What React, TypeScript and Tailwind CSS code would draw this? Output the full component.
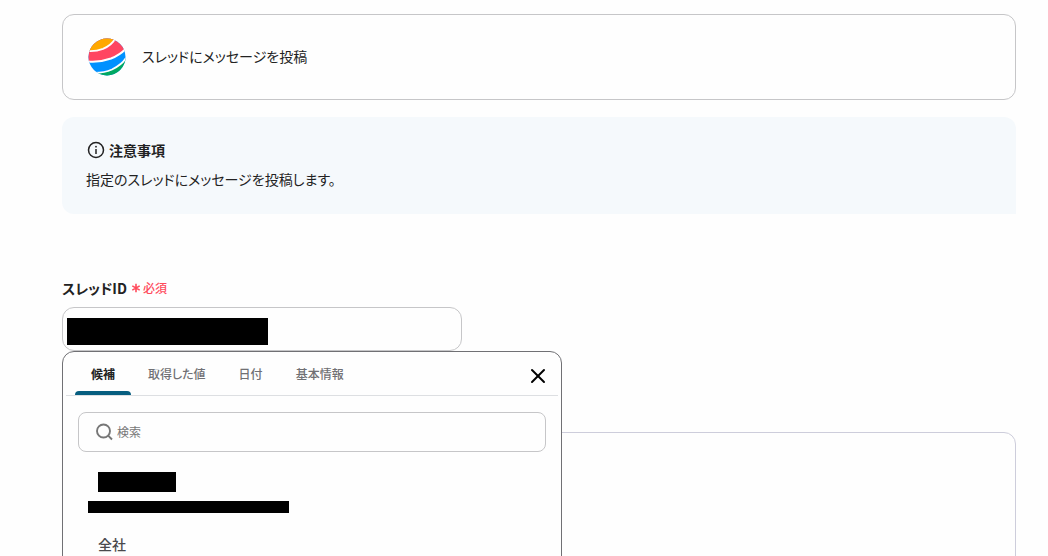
import React, { useState } from 'react';
import { X } from 'lucide-react';

const tabs = [
  { id: 'candidates', label: '候補' },
  { id: 'values', label: '取得した値' },
  { id: 'date', label: '日付' },
  { id: 'basic', label: '基本情報' },
];

function AppLogo() {
  return (
    <svg viewBox="0 0 38 38" className="w-[38px] h-[38px] shrink-0" aria-hidden="true">
      <defs>
        <clipPath id="ball">
          <circle cx="19" cy="19" r="18.5" />
        </clipPath>
      </defs>
      <g clipPath="url(#ball)">
        <rect width="38" height="38" fill="#0091ff" />
        <path d="M0 0H38V10Q32 17 23 20.500Q11 24 0 23Z" fill="#ff4661" />
        <path d="M0 0H27Q23 7 15 10.500Q9 12.800 0 12.800Z" fill="#ffa800" />
        <path d="M0 35Q14 36.500 24 32Q34 27 38 20V38H0Z" fill="#00a862" />
        <g fill="none" stroke="#fefefe" strokeWidth="1.9">
          <path d="M0 13Q8 13.500 15 10.800Q24 7 27.500 0" />
          <path d="M0 23.5Q12 24.500 23 20.500Q32 17 38 10.500" />
          <path d="M0 34.500Q14 36 24 31.500Q34 26.500 38 20" />
        </g>
      </g>
    </svg>
  );
}

function InfoIcon() {
  return (
    <svg viewBox="0 0 18 18" className="w-[18px] h-[18px] shrink-0" fill="none" stroke="currentColor" aria-hidden="true">
      <circle cx="9" cy="9" r="7.500" strokeWidth="1.500" />
      <path d="M9 8V13" strokeWidth="1.500" />
      <circle cx="9" cy="5.700" r="0.900" fill="currentColor" stroke="none" />
    </svg>
  );
}

function RequiredMark() {
  return (
    <svg viewBox="0 0 10 10" className="w-[10px] h-[10px] shrink-0" fill="none" stroke="currentColor" strokeWidth="1.6" aria-hidden="true">
      <path d="M5 0.700V9.300M1.300 2.900L8.700 7.100M1.300 7.100L8.700 2.900" />
    </svg>
  );
}

function SearchIcon() {
  return (
    <svg viewBox="0 0 18 18" className="w-[18px] h-[18px] shrink-0 text-[#777]" fill="none" stroke="currentColor" strokeWidth="1.900" aria-hidden="true">
      <circle cx="8.500" cy="8" r="6.500" />
      <path d="M13.200 12.700L17 16.500" />
    </svg>
  );
}

function CandidatePanel() {
  const [activeTab, setActiveTab] = useState('candidates');
  const [open, setOpen] = useState(true);
  const [query, setQuery] = useState('');

  if (!open) return null;

  return (
    <div className="absolute left-0 top-full z-10 w-[500px] max-w-full h-80 rounded-xl border border-[#707074] bg-[#fefefe] px-[3px]">
      <div className="flex items-center justify-between border-b border-[#dddfe2] px-2">
        <div role="tablist" className="flex gap-px pl-px">
          {tabs.map((tab) => (
            <button
              key={tab.id}
              role="tab"
              aria-selected={activeTab === tab.id}
              onClick={() => setActiveTab(tab.id)}
              className={`relative h-[43px] px-4 text-xs ${activeTab === tab.id ? 'font-bold text-[#222]' : 'font-medium text-[#707074]'}`}
            >
              {tab.label}
              {activeTab === tab.id && (
                <span className="absolute inset-x-0 bottom-0 h-1 rounded-t bg-[#075e80]" />
              )}
            </button>
          ))}
        </div>
        <button aria-label="閉じる" onClick={() => setOpen(false)} className="pt-1">
          <X className="w-6 h-6 text-black" strokeWidth={2} />
        </button>
      </div>

      <div className="px-3 pt-4">
        <label className="flex items-center gap-1 h-10 rounded-lg border border-[#c6c6c8] px-4">
          <SearchIcon />
          <input
            type="text"
            aria-label="検索"
            placeholder="検索"
            value={query}
            onChange={(e) => setQuery(e.target.value)}
            className="w-full bg-transparent text-xs text-[#333] placeholder:text-[#777] outline-none"
          />
        </label>
      </div>

      <ul className="px-[22px] pt-5 text-sm font-medium text-[#4a4a4d]">
        <li>
          <button aria-label="候補 1" className="block">
            <span className="block ml-[10px] h-5 w-[78px] bg-black" />
            <span className="block mt-[9px] h-3 w-[201px] bg-black" />
          </button>
        </li>
        <li className="pt-[21px]">
          <button className="block pl-[10px] leading-5">全社</button>
        </li>
      </ul>
    </div>
  );
}

export default function App() {
  const [threadId, setThreadId] = useState('');

  return (
    <main
      lang="ja"
      className="h-screen overflow-hidden bg-[#fefefe] pl-[62px] pr-8 pt-[14px] text-sm text-[#222] font-['Noto_Sans_CJK_JP',sans-serif] [font-feature-settings:'palt']"
    >
      <section className="flex items-center gap-4 rounded-xl border border-[#c6c6c8] px-[25px] py-[23px]">
        <AppLogo />
        <p className="pb-0.5">スレッドにメッセージを投稿</p>
      </section>

      <section className="mt-[17px] rounded-xl rounded-br-none bg-[#f5f9fc] px-6 pt-[23px] pb-[25px]">
        <h2 className="flex items-center gap-1 pl-px font-bold leading-5">
          <InfoIcon />
          注意事項
        </h2>
        <p className="mt-[9px] leading-5">指定のスレッドにメッセージを投稿します。</p>
      </section>

      <div className="relative mt-16">
        <label htmlFor="thread-id" className="flex items-center gap-1 leading-5 font-bold">
          スレッドID
          <span className="flex items-center gap-0.5 text-xs font-medium text-[#ff4b5c]">
            <RequiredMark />
            必須
          </span>
        </label>
        <div className="relative mt-[9px] w-[400px] max-w-full">
          <input
            id="thread-id"
            type="text"
            value={threadId}
            onChange={(e) => setThreadId(e.target.value)}
            className="block w-full h-11 rounded-xl border border-[#c6c6c8] bg-transparent px-4 outline-none"
          />
          <span className="absolute left-[5px] top-[11px] h-[27px] w-[201px] bg-black" />
        </div>
        <CandidatePanel />
      </div>

      <section className="mt-[81px] h-80 rounded-xl border border-[#cdcddb]" />
    </main>
  );
}
